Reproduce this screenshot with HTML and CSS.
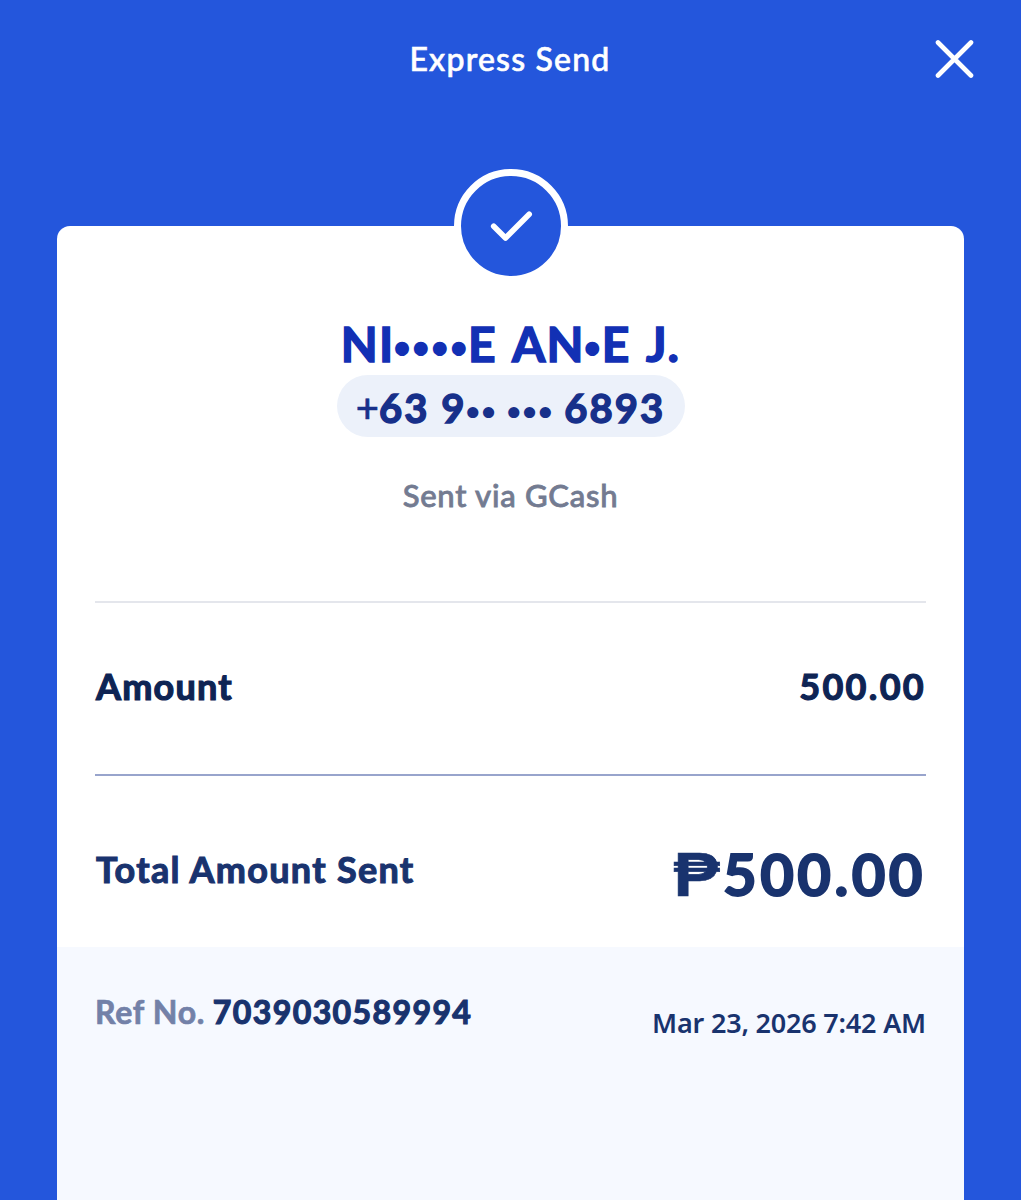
FILE: index.html
```html
<!DOCTYPE html>
<html lang="en">
  <head>
    <meta charset="UTF-8" />
    <meta name="viewport" content="width=device-width, initial-scale=1.0" />
    <title>Express Send</title>
    <link rel="stylesheet" href="styles.css">
  </head>
  <body>
    <header class="topbar">
      <h1 class="heading">Express Send</h1>
      <button class="close" type="button" aria-label="Close">
        <svg width="40" height="40" viewBox="0 0 40 40">
          <path d="M3 3.5L36 36.5M36 3.5L3 36.5" />
        </svg>
      </button>
    </header>

    <main class="receipt">
      <div class="badge">
        <svg width="100" height="100" viewBox="0 0 100 100">
          <path d="M32.7 50.3L44.5 62L68.2 38.3" />
        </svg>
      </div>

      <section class="recipient">
        <h2 class="name">NI<span class="dots">••••</span>E AN<span class="dots">•</span>E J.</h2>
        <p class="phone"><span class="plus">+</span>63 9<span class="dots">••</span> <span class="dots">•••</span> 6893</p>
        <p class="via">Sent via GCash</p>
      </section>

      <section class="row amount">
        <span class="label">Amount</span>
        <span class="value">500.00</span>
      </section>

      <section class="row total">
        <span class="label">Total Amount Sent</span>
        <span class="value"><span class="peso">₱</span>500.00</span>
      </section>

      <footer class="details">
        <p class="ref"><span class="ref-label">Ref No.</span> <span class="ref-no">7039030589994</span></p>
        <p class="date">Mar 23, 2026 7:42 AM</p>
      </footer>
    </main>
  </body>
</html>
```

FILE: styles.css
```css
* {
  box-sizing: border-box;
  margin: 0;
  padding: 0;
}
body {
  display: flex;
  flex-direction: column;
  height: 100vh;
  overflow: hidden;
  background-color: #2456dc;
  font-family: Lato, "Open Sans", sans-serif;
}
.topbar {
  display: grid;
  grid-template-columns: 1fr auto 1fr;
  align-items: center;
  height: 118px;
  padding: 0 46px 0 45px;
  color: #fff;
}
.heading {
  grid-column: 2;
  padding-bottom: 2px;
  font-size: 32px;
  font-weight: 500;
  letter-spacing: 1.2px;
  -webkit-text-stroke: 0.6px #fff;
}
.close {
  justify-self: end;
  height: 40px;
  border: none;
  background: none;
}
.close svg {
  display: block;
  fill: none;
  stroke: #fff;
  stroke-width: 4.6;
  stroke-linecap: round;
}
.receipt {
  position: relative;
  display: flex;
  flex-direction: column;
  flex: 1;
  margin: 108px 57px 0;
  border-radius: 13px 13px 0 0;
  background-color: #fff;
}
.badge {
  position: absolute;
  top: -57px;
  left: 50%;
  width: 114px;
  height: 114px;
  margin-left: -57px;
  border: 7px solid #fff;
  border-radius: 50%;
  background-color: #2456dc;
}
.badge svg {
  display: block;
  fill: none;
  stroke: #fff;
  stroke-width: 5.6;
  stroke-linecap: round;
  stroke-linejoin: round;
}
.recipient {
  display: flex;
  flex-direction: column;
  align-items: center;
  height: 375px;
  padding-top: 87px;
}
.name {
  height: 62px;
  line-height: 62px;
  font-size: 48px;
  font-weight: 700;
  letter-spacing: 1.2px;
  color: #1230b4;
  word-spacing: 4px;
  white-space: nowrap;
  -webkit-text-stroke: 1.5px #1230b4;
}
.dots {
  margin-right: -0.08em;
  font-size: 0.54em;
  line-height: 0;
  letter-spacing: 0.15em;
  vertical-align: 0.2em;
  -webkit-text-stroke-width: 2.6px;
}
.phone {
  width: 348px;
  height: 62px;
  line-height: 66px;
  border-radius: 31px;
  background-color: #ecf1fa;
  font-size: 40px;
  font-weight: 700;
  letter-spacing: 2px;
  color: #17308a;
  text-align: center;
  white-space: nowrap;
  -webkit-text-stroke: 1.4px #17308a;
}
.phone .dots {
  margin-right: -0.1em;
  -webkit-text-stroke-width: 1.8px;
}
.plus {
  font-weight: 500;
  letter-spacing: 0;
  -webkit-text-stroke-width: 0.6px;
}
.via {
  margin-top: 38px;
  line-height: 40px;
  font-size: 31px;
  font-weight: 500;
  letter-spacing: 0.75px;
  color: #737b91;
  -webkit-text-stroke: 0.8px #737b91;
}
.row {
  display: flex;
  justify-content: space-between;
  align-items: center;
  margin: 0 38px;
  font-weight: 700;
}
.amount {
  height: 173px;
  border-top: 2px solid #e4e6ec;
  padding-bottom: 5px;
  font-size: 36px;
  letter-spacing: 1.2px;
  color: #0e2454;
  -webkit-text-stroke: 1.2px #0e2454;
}
.amount .label {
  padding-left: 1px;
}
.amount .value {
  letter-spacing: 2.3px;
}
.total {
  height: 173px;
  border-top: 2px solid #98a4cc;
  padding-top: 20px;
  color: #19336e;
  -webkit-text-stroke: 1.1px #19336e;
}
.total .label {
  padding-bottom: 5px;
  padding-left: 1px;
  font-size: 36px;
  letter-spacing: 1.3px;
}
.total .value {
  padding-top: 4px;
  font-size: 58px;
  letter-spacing: 3.5px;
  -webkit-text-stroke-width: 2px;
}
.peso {
  display: inline-block;
  transform: scaleX(1.1);
  transform-origin: right;
  font-family: "Liberation Sans", sans-serif;
  font-size: 63px;
  font-weight: 700;
  line-height: 1;
  letter-spacing: 3px;
  -webkit-text-stroke-width: 0.6px;
}
.details {
  display: flex;
  justify-content: space-between;
  flex: 1;
  padding: 0 38px;
  background-color: #f6f9ff;
  color: #19336e;
}
.ref {
  padding-top: 45px;
  line-height: 40px;
  font-size: 32px;
  font-weight: 700;
}
.ref-label {
  letter-spacing: 0.7px;
  color: #7381a8;
  -webkit-text-stroke: 0.7px #7381a8;
}
.ref-no {
  letter-spacing: 1.4px;
  -webkit-text-stroke: 1.2px #19336e;
}
.date {
  padding-top: 56px;
  line-height: 40px;
  font-family: "Noto Sans", sans-serif;
  font-size: 27px;
  font-weight: 600;
  letter-spacing: -0.2px;
}
```
